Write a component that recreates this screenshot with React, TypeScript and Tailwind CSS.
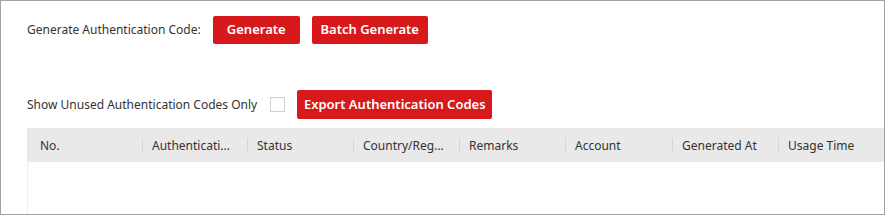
const columns = [
  { label: "No.", width: "w-[115px]", pad: "pl-[13px]" },
  { label: "Authenticati...", width: "w-[105px]", pad: "pl-[10px]" },
  { label: "Status", width: "w-[106px]", pad: "pl-[10px]" },
  { label: "Country/Reg...", width: "w-[106px]", pad: "pl-[10px]" },
  { label: "Remarks", width: "w-[106px]", pad: "pl-[10px]" },
  { label: "Account", width: "w-[107px]", pad: "pl-[10px]" },
  { label: "Generated At", width: "w-[106px]", pad: "pl-[10px]" },
  { label: "Usage Time", width: "flex-1", pad: "pl-[10px]" },
];

function RedButton({ children, width }: { children: React.ReactNode; width: string }) {
  return (
    <button
      className={`${width} flex h-[28px] items-center justify-center rounded-[2px] bg-[#d7191b] text-[13px] font-semibold text-white`}
    >
      {children}
    </button>
  );
}

export default function App() {
  return (
    <div className="h-[216px] w-[886px] bg-white font-['Noto_Sans','Open_Sans',sans-serif] text-[#333]">
      <div className="flex h-[215px] w-[885px] flex-col border border-[#a3a3a3] pl-[26px] pt-[15px]">
        {/* generate row */}
        <div className="flex items-center">
          <span className="text-[12px] text-[#333]">Generate Authentication Code:</span>
          <div className="ml-[12px] flex gap-[12px]">
            <RedButton width="w-[87px]">Generate</RedButton>
            <RedButton width="w-[116px]">Batch Generate</RedButton>
          </div>
        </div>

        {/* filter row */}
        <div className="mt-[46px] flex items-center">
          <span className="text-[12px] text-[#333]">Show Unused Authentication Codes Only</span>
          <span className="ml-[13px] h-[15px] w-[15px] border border-[#cfcfcf] bg-white" />
          <div className="ml-[12px]">
            <RedButton width="w-[195px] h-[29px]">Export Authentication Codes</RedButton>
          </div>
        </div>

        {/* table */}
        <div className="mt-[9px] flex flex-1 flex-col">
          <div className="flex h-[34px] items-center bg-[#e9e9e9]">
            {columns.map((c, i) => (
              <div key={c.label} className={`${c.width} relative flex h-full min-w-0 items-center ${c.pad}`}>
                {i > 0 && (
                  <span className="absolute left-0 top-[10px] h-[14px] w-px bg-[#d6d6d6]" />
                )}
                <span className="whitespace-nowrap pt-px text-[12px] text-[#333]">{c.label}</span>
              </div>
            ))}
          </div>
          <div className="flex-1 border-l border-[#eeeeee] bg-white" />
        </div>
      </div>
    </div>
  );
}
